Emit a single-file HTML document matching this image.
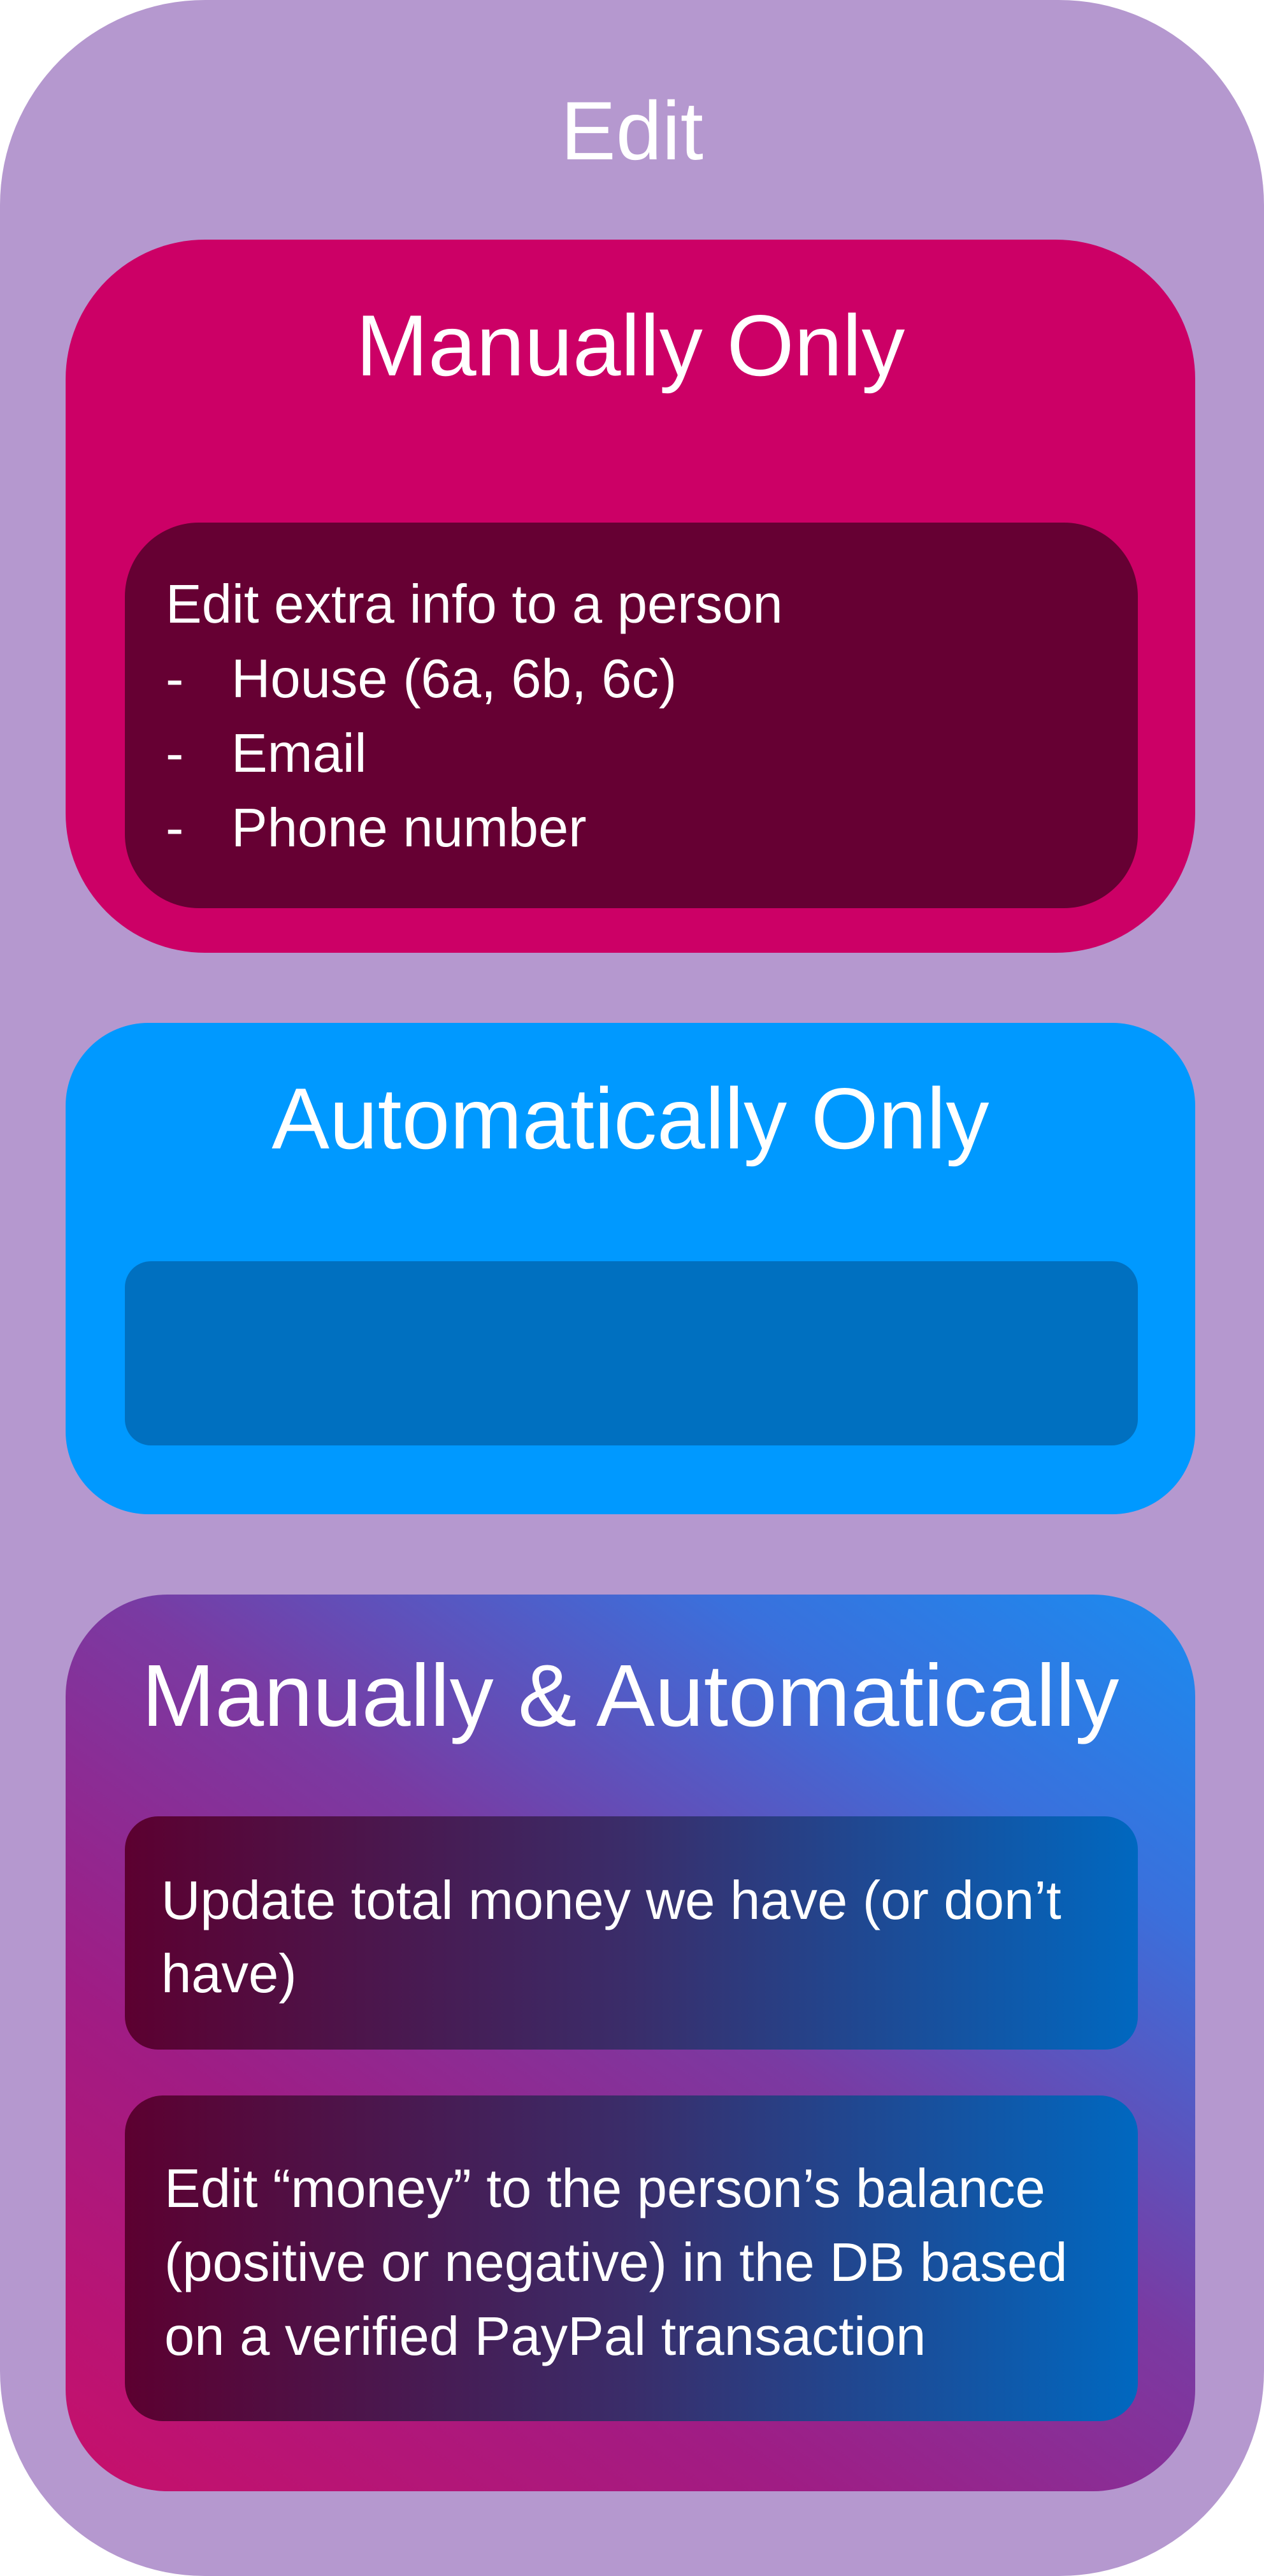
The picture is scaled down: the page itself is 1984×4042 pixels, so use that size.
<!DOCTYPE html>
<html><head><meta charset="utf-8"><style>
*{margin:0;padding:0;box-sizing:border-box}
body{width:1984px;height:4042px;background:#fff;font-family:"Liberation Sans","DejaVu Sans",sans-serif;color:#fff;position:relative;overflow:hidden}
.abs{position:absolute}
.outer{left:0;top:0;width:1984px;height:4042px;background:#b598cf;border-radius:322px}
.t{position:absolute;left:0;width:100%;text-align:center;line-height:1}
.box{position:absolute;left:103px;width:1773px}
.in{position:absolute;left:93px;width:1590px}
.ln{position:absolute;font-size:85px;line-height:1;white-space:nowrap}
</style></head><body>
<div class="abs outer"></div>
<div class="t" style="top:140px;font-size:130px">Edit</div>

<div class="box" style="top:376px;height:1119px;background:#cc0066;border-radius:219px">
  <div class="t" style="top:98px;font-size:136px">Manually Only</div>
  <div class="in" style="top:444px;height:605px;background:#660033;border-radius:116px">
    <div class="ln" style="left:64px;top:86px">Edit extra info to a person</div>
    <div class="ln" style="left:64px;top:203px">-</div><div class="ln" style="left:167px;top:203px">House (6a, 6b, 6c)</div>
    <div class="ln" style="left:64px;top:320px">-</div><div class="ln" style="left:167px;top:320px">Email</div>
    <div class="ln" style="left:64px;top:437px">-</div><div class="ln" style="left:167px;top:437px">Phone number</div>
  </div>
</div>

<div class="box" style="top:1605px;height:771px;background:#0099ff;border-radius:130px">
  <div class="t" style="top:82px;font-size:136px">Automatically Only</div>
  <div class="in" style="top:374px;height:289px;background:#0070c0;border-radius:41px"></div>
</div>

<div class="box" style="top:2502px;height:1407px;border-radius:160px;overflow:hidden;background:linear-gradient(35deg,#c80f6a 0%,#a01c84 30%,#7a3aa2 55%,#3a70dc 80%,#1a8cf0 100%)">
  <div class="t" style="top:90px;font-size:138px">Manually &amp; Automatically</div>
  <div class="in" style="top:348px;height:366px;border-radius:52px;background:linear-gradient(90deg,#5c0030,#3a2d6a 50%,#0068c0)">
    <div class="ln" style="left:57px;top:90px">Update total money we have (or don’t</div>
    <div class="ln" style="left:57px;top:205px">have)</div>
  </div>
  <div class="in" style="top:786px;height:511px;border-radius:60px;background:linear-gradient(90deg,#5c0030,#3a2d6a 50%,#0068c0)">
    <div class="ln" style="left:62px;top:104px">Edit “money” to the person’s balance</div>
    <div class="ln" style="left:62px;top:220px">(positive or negative) in the DB based</div>
    <div class="ln" style="left:62px;top:336px">on a verified PayPal transaction</div>
  </div>
</div>
</body></html>
